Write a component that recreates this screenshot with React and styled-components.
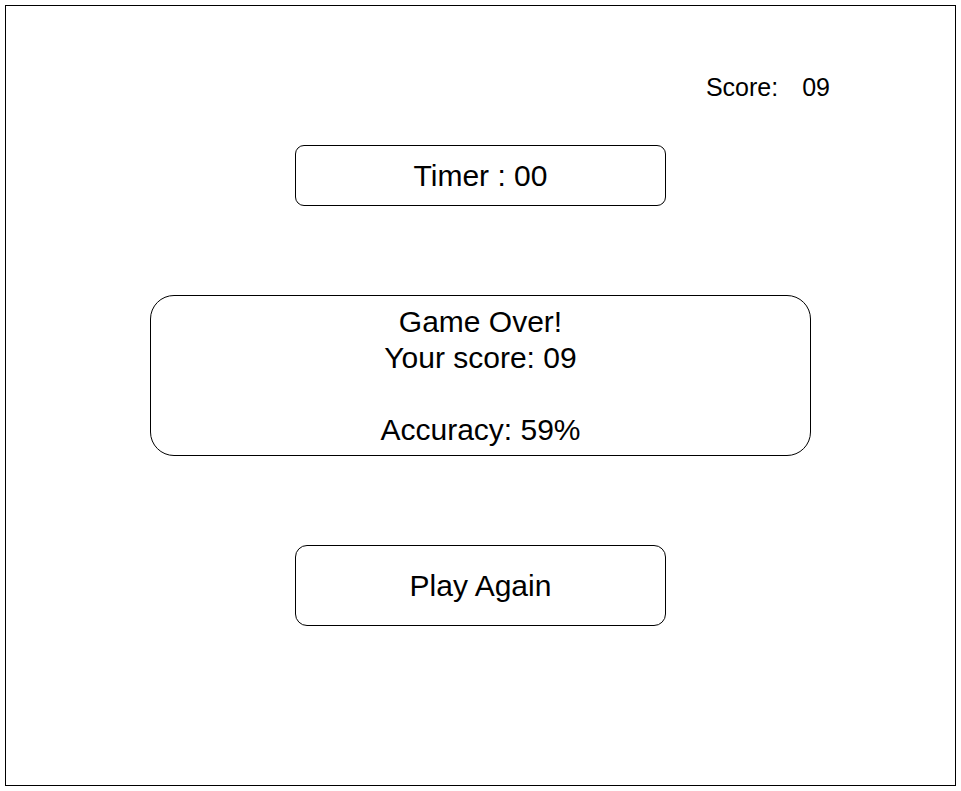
import React from "react";
import styled, { createGlobalStyle } from "styled-components";

const GlobalStyle = createGlobalStyle`
  html, body {
    margin: 0;
    padding: 0;
    background: #ffffff;
  }
  body {
    font-family: "Liberation Sans", Arial, sans-serif;
    color: #000000;
  }
  * { box-sizing: border-box; }
`;

const Frame = styled.div`
  margin: 5px 0 0 5px;
  width: 951px;
  height: 781px;
  border: 1px solid #000;
  display: flex;
  flex-direction: column;
  align-items: center;
  padding-top: 67px;
`;

const ScoreRow = styled.div`
  align-self: stretch;
  display: flex;
  justify-content: flex-end;
  gap: 24px;
  padding-right: 125px;
  font-size: 25px;
  line-height: 28px;
`;

const Panel = styled.div`
  width: ${(p) => p.$w}px;
  height: ${(p) => p.$h}px;
  margin-top: ${(p) => p.$mt}px;
  border: 1px solid #000;
  border-radius: ${(p) => p.$r}px;
  display: flex;
  flex-direction: column;
  align-items: center;
  justify-content: center;
  font-size: 30px;
  line-height: 36px;
  text-align: center;
`;

const Line = styled.div`
  height: 36px;
`;

export default function App() {
  return (
    <>
      <GlobalStyle />
      <Frame>
        <ScoreRow>
          <span>Score:</span>
          <span>09</span>
        </ScoreRow>
        <Panel $w={371} $h={61} $mt={44} $r={9}>Timer : 00</Panel>
        <Panel $w={661} $h={161} $mt={89} $r={24}>
          <Line>Game Over!</Line>
          <Line>Your score: 09</Line>
          <Line />
          <Line>Accuracy: 59%</Line>
        </Panel>
        <Panel $w={371} $h={81} $mt={89} $r={12}>Play Again</Panel>
      </Frame>
    </>
  );
}
